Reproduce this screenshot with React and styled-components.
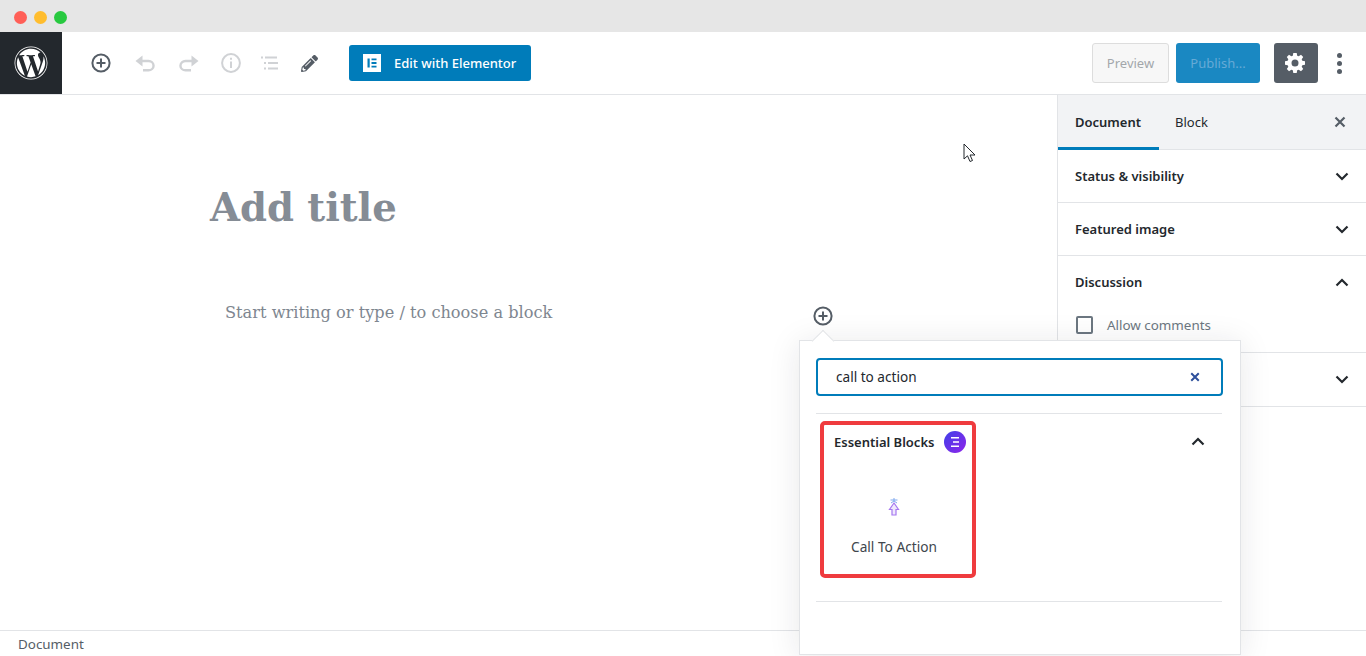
import styled, { createGlobalStyle } from 'styled-components';
import { FaWordpress, FaPencilAlt } from 'react-icons/fa';

const Global = createGlobalStyle`
  html, body { margin: 0; padding: 0; background: #fff; }
  body { font-family: "Noto Sans", "Open Sans", sans-serif; overflow: hidden; }
  * { box-sizing: border-box; }
`;

const Shell = styled.div`
  width: 1366px;
  height: 656px;
  display: flex;
  flex-direction: column;
  position: relative;
  overflow: hidden;
`;

const TitleBar = styled.div`
  height: 32px;
  background: #e6e6e6;
  display: flex;
  align-items: center;
  gap: 7px;
  padding: 2px 0 0 14px;
`;

const Dot = styled.span`
  width: 13px;
  height: 13px;
  border-radius: 50%;
  background: ${(p) => p.$color};
`;

const Toolbar = styled.header`
  height: 63px;
  border-bottom: 1px solid #e2e4e7;
  display: flex;
  align-items: center;
  padding-right: 16px;
  background: #fff;
`;

const Logo = styled.div`
  width: 62px;
  height: 62px;
  background: #23282d;
  color: #fff;
  display: flex;
  align-items: center;
  justify-content: center;
`;

const Tools = styled.div`
  display: flex;
  align-items: center;
  padding-left: 17px;
`;

const Tool = styled.span`
  width: ${(p) => p.$w || 44}px;
  height: 40px;
  display: flex;
  align-items: center;
  justify-content: center;
  color: ${(p) => (p.$off ? '#d0d2d5' : '#555d66')};
`;

const ElementorButton = styled.div`
  margin-left: 19px;
  width: 182px;
  height: 36px;
  background: #007cba;
  border-radius: 3px;
  color: #fff;
  font-size: 13px;
  font-weight: 500;
  display: flex;
  align-items: center;
  gap: 13px;
  padding-left: 14px;
`;

const Actions = styled.div`
  margin-left: auto;
  display: flex;
  align-items: center;
`;

const PreviewButton = styled.div`
  width: 77px;
  height: 40px;
  border: 1px solid #ddd;
  border-radius: 3px;
  background: #f7f7f7;
  color: #a3a7ab;
  font-size: 13px;
  display: flex;
  align-items: center;
  justify-content: center;
`;

const PublishButton = styled.div`
  margin-left: 7px;
  width: 84px;
  height: 40px;
  border-radius: 3px;
  background: #1a88c2;
  color: #66aad6;
  font-size: 13px;
  display: flex;
  align-items: center;
  justify-content: center;
`;

const GearButton = styled.div`
  margin-left: 14px;
  width: 44px;
  height: 40px;
  border-radius: 3px;
  background: #555d66;
  color: #fff;
  display: flex;
  align-items: center;
  justify-content: center;
  padding-right: 2px;
`;

const MoreButton = styled.div`
  margin-left: 10px;
  width: 22px;
  display: flex;
  flex-direction: column;
  align-items: center;
  gap: 3px;
  & > span {
    width: 5px;
    height: 5px;
    border-radius: 50%;
    background: #555d66;
  }
`;

const Main = styled.div`
  flex: 1;
  display: flex;
  min-height: 0;
`;

const Editor = styled.main`
  flex: 1;
  position: relative;
  display: flex;
  flex-direction: column;
`;

const PostTitle = styled.h1`
  margin: 88px 0 0 210px;
  font-family: "DejaVu Serif", "Liberation Serif", serif;
  font-weight: 700;
  font-size: 38.6px;
  line-height: 50px;
  color: #858c95;
`;

const BlockRow = styled.div`
  margin: 67px 0 0 225px;
  width: 608px;
  height: 32px;
  display: flex;
  align-items: center;
  justify-content: space-between;
`;

const Placeholder = styled.p`
  margin: 0;
  font-family: "DejaVu Serif", "Liberation Serif", serif;
  font-size: 16.2px;
  color: #7e8690;
  position: relative;
  top: -4px;
`;

const InserterIcon = styled.span`
  display: flex;
  color: #555d66;
`;

const Popover = styled.div`
  position: absolute;
  left: 799px;
  top: 245px;
  width: 442px;
  height: 315px;
  background: #fff;
  border: 1px solid #e2e4e7;
  box-shadow: 0 3px 30px rgba(25, 30, 35, 0.1);
  padding: 17px 17px 0 16px;
  z-index: 5;
  &::before {
    content: '';
    position: absolute;
    left: 15px;
    top: -8px;
    width: 15px;
    height: 15px;
    background: #fff;
    border-left: 1px solid #e2e4e7;
    border-top: 1px solid #e2e4e7;
    transform: rotate(45deg);
  }
`;

const SearchBox = styled.div`
  position: relative;
  width: 407px;
  height: 38px;
  border: 2px solid #007cba;
  border-radius: 4px;
  display: flex;
  align-items: center;
  justify-content: space-between;
  padding: 0 21px 1px 18px;
  font-size: 13.6px;
  color: #23282d;
`;

const ResultSection = styled.section`
  margin-top: 17px;
  width: 406px;
  height: 189px;
  border-top: 1px solid #e2e4e7;
  border-bottom: 1px solid #e2e4e7;
  display: flex;
  justify-content: space-between;
  align-items: flex-start;
  padding: 7px 17px 0 4px;
`;

const SectionToggle = styled.span`
  display: flex;
  margin-top: 16px;
`;

const HighlightCard = styled.div`
  width: 156px;
  height: 157px;
  border: 4px solid #ef3b3e;
  border-radius: 5px;
  display: flex;
  flex-direction: column;
  padding: 6px 6px 0 10px;
`;

const CategoryRow = styled.div`
  display: flex;
  align-items: center;
  justify-content: space-between;
  font-size: 13px;
  font-weight: 600;
  color: #23282d;
`;

const BrandBadge = styled.span`
  width: 22px;
  height: 22px;
  border-radius: 50%;
  background: linear-gradient(135deg, #3f3fe8, #8f25ea);
  display: flex;
  align-items: center;
  justify-content: center;
`;

const BlockItem = styled.div`
  display: flex;
  flex-direction: column;
  align-items: center;
  margin: 44px 0 0 -4px;
  width: 128px;
  font-size: 13.7px;
  color: #40464d;
  gap: 20px;
`;

const Sidebar = styled.aside`
  width: 309px;
  border-left: 1px solid #e2e4e7;
  display: flex;
  flex-direction: column;
`;

const TabBar = styled.div`
  height: 55px;
  background: #f2f3f5;
  border-bottom: 1px solid #e2e4e7;
  display: flex;
  align-items: stretch;
`;

const Tab = styled.div`
  padding: 2px 18px 0 ${(p) => (p.$active ? 17 : 16)}px;
  display: flex;
  align-items: center;
  font-size: 13px;
  font-weight: ${(p) => (p.$active ? 600 : 400)};
  color: #23282d;
  margin-bottom: -1px;
  border-bottom: 3px solid ${(p) => (p.$active ? '#007cba' : 'transparent')};
`;

const TabClose = styled.span`
  margin-left: auto;
  margin-right: 20px;
  display: flex;
  align-items: center;
  color: #555d66;
`;

const Panel = styled.section`
  border-bottom: 1px solid #e2e4e7;
`;

const PanelHead = styled.div`
  height: ${(p) => (p.$tall ? 53 : 52)}px;
  display: flex;
  align-items: center;
  justify-content: space-between;
  padding: 0 17px 0 17px;
  font-size: 13px;
  font-weight: 600;
  color: #23282d;
`;

const CheckRow = styled.label`
  height: 44px;
  display: flex;
  align-items: flex-start;
  gap: 14px;
  padding: 8px 0 0 18px;
  font-size: 13.4px;
  color: #6c7781;
  line-height: 19px;
`;

const CheckBox = styled.span`
  width: 17px;
  height: 18px;
  border: 2px solid #6c7781;
  border-radius: 2px;
`;

const StatusBar = styled.footer`
  height: 26px;
  border-top: 1px solid #e2e4e7;
  padding-left: 18px;
  display: flex;
  align-items: center;
  font-size: 13.4px;
  color: #555d66;
`;

const Cursor = styled.svg`
  position: absolute;
  left: 963px;
  top: 143px;
  z-index: 6;
`;

const Chevron = ({ up, color = '#23282d' }) => (
  <svg width="14" height="9" viewBox="0 0 14 9" fill="none" stroke={color} strokeWidth="2.2">
    <path d={up ? 'M1.5 7.5 7 2l5.5 5.5' : 'M1.5 1.5 7 7l5.5-5.5'} />
  </svg>
);

const CloseX = ({ size = 12, width = 2.2, color = 'currentColor' }) => (
  <svg width={size} height={size} viewBox="0 0 12 12" fill="none" stroke={color} strokeWidth={width}>
    <path d="M1.5 1.5l9 9M10.5 1.5l-9 9" />
  </svg>
);

const PlusCircle = () => (
  <svg width="20" height="20" viewBox="0 0 20 20" fill="none" stroke="currentColor" strokeWidth="2">
    <circle cx="10" cy="10" r="8.6" />
    <path d="M10 5.5v9M5.5 10h9" />
  </svg>
);

const Undo = () => (
  <svg width="20" height="17" viewBox="0 0 20 17" fill="none" stroke="currentColor" strokeWidth="2.4">
    <path d="M7.5 0.5 0.5 6l7 5.500z" fill="currentColor" stroke="none" />
    <path d="M5 6h8.500a5 4.600 0 0 1 0 9.300H8" />
  </svg>
);

const Redo = () => (
  <svg width="20" height="17" viewBox="0 0 20 17" fill="none" stroke="currentColor" strokeWidth="2.4">
    <path d="M12.5 0.5 19.500 6l-7 5.500z" fill="currentColor" stroke="none" />
    <path d="M15 6H6.500a5 4.600 0 0 0 0 9.300H12" />
  </svg>
);

const Info = () => (
  <svg width="20" height="20" viewBox="0 0 20 20" fill="none" stroke="currentColor" strokeWidth="2">
    <circle cx="10" cy="10" r="8.900" />
    <path d="M10 8.500V15M10 4.800v2" />
  </svg>
);

const ListIcon = () => (
  <svg width="18" height="14" viewBox="0 0 18 14" fill="none" stroke="currentColor" strokeWidth="2">
    <path d="M0 1.500h2M4 1.500h12M3 7h2M7 7h10M3 12.500h2M7 12.500h10" />
  </svg>
);

const ElementorMark = () => (
  <svg width="18" height="18" viewBox="0 0 18 18">
    <rect width="18" height="18" fill="#fff" />
    <path d="M4.500 4.500h2.200v9H4.500zM8.500 4.500h5v1.800h-5zM8.500 8.100h5v1.800h-5zM8.500 11.700h5v1.800h-5z" fill="#007cba" />
  </svg>
);

const Gear = () => (
  <svg width="20" height="20" viewBox="0 0 20 20" fill="#fff">
    <path
      fillRule="evenodd"
      d="M8.300 0h3.400l.5 2.700 1.500.6L16 1.800 18.200 4l-1.500 2.300.6 1.500 2.700.5v3.400l-2.700.5-.6 1.500 1.500 2.300-2.200 2.200-2.300-1.500-1.500.6-.5 2.700H8.300l-.5-2.700-1.500-.6L4 18.200 1.800 16l1.500-2.300-.6-1.500L0 11.700V8.300l2.700-.5.6-1.500L1.800 4 4 1.800l2.300 1.500 1.500-.6zM10 6.500a3.500 3.500 0 1 0 0 7 3.500 3.500 0 0 0 0-7z"
    />
  </svg>
);

const BadgeLines = () => (
  <svg width="12" height="12" viewBox="0 0 12 12" fill="#fff">
    <path d="M2 1h8v1.500H2zM4 5.200h6v1.500H4zM2 9.500h8V11H2z" />
  </svg>
);

const CallToActionIcon = () => (
  <svg width="12" height="20" viewBox="0 0 12 20" fill="none">
    <path d="M6 1v3M2.500 3 9.500 3M3 6l3-2 3 2" stroke="#7fa8ee" strokeWidth="1" />
    <path d="M6 6 1.500 12.500H4V18h4v-5.500h2.500z" stroke="#a678f0" strokeWidth="1.200" fill="#efe8fd" />
  </svg>
);

export default function App() {
  return (
    <>
      <Global />
      <Shell>
        <TitleBar>
          <Dot $color="#ff5f57" />
          <Dot $color="#ffbd2e" />
          <Dot $color="#28c940" />
        </TitleBar>

        <Toolbar>
          <Logo>
            <FaWordpress size={34} />
          </Logo>
          <Tools>
            <Tool><PlusCircle /></Tool>
            <Tool $off><Undo /></Tool>
            <Tool $off><Redo /></Tool>
            <Tool $off $w={40}><Info /></Tool>
            <Tool $off $w={38}><ListIcon /></Tool>
            <Tool $w={41}><FaPencilAlt size={17} /></Tool>
          </Tools>
          <ElementorButton>
            <ElementorMark />
            Edit with Elementor
          </ElementorButton>
          <Actions>
            <PreviewButton>Preview</PreviewButton>
            <PublishButton>Publish...</PublishButton>
            <GearButton><Gear /></GearButton>
            <MoreButton><span /><span /><span /></MoreButton>
          </Actions>
        </Toolbar>

        <Main>
          <Editor>
            <PostTitle>Add title</PostTitle>
            <BlockRow>
              <Placeholder>Start writing or type / to choose a block</Placeholder>
              <InserterIcon><PlusCircle /></InserterIcon>
            </BlockRow>

            <Popover>
              <SearchBox>
                call to action
                <CloseX size={10} width={2.4} color="#2d4f9b" />
              </SearchBox>
              <ResultSection>
                <HighlightCard>
                  <CategoryRow>
                    Essential Blocks
                    <BrandBadge><BadgeLines /></BrandBadge>
                  </CategoryRow>
                  <BlockItem>
                    <CallToActionIcon />
                    Call To Action
                  </BlockItem>
                </HighlightCard>
                <SectionToggle><Chevron up /></SectionToggle>
              </ResultSection>
            </Popover>
          </Editor>

          <Sidebar>
            <TabBar>
              <Tab $active>Document</Tab>
              <Tab>Block</Tab>
              <TabClose><CloseX size={12} /></TabClose>
            </TabBar>
            <Panel>
              <PanelHead>Status &amp; visibility<Chevron /></PanelHead>
            </Panel>
            <Panel>
              <PanelHead>Featured image<Chevron /></PanelHead>
            </Panel>
            <Panel>
              <PanelHead>Discussion<Chevron up /></PanelHead>
              <CheckRow><CheckBox />Allow comments</CheckRow>
            </Panel>
            <Panel>
              <PanelHead $tall><span /><Chevron /></PanelHead>
            </Panel>
          </Sidebar>
        </Main>

        <StatusBar>Document</StatusBar>

        <Cursor width="14" height="20" viewBox="0 0 14 20">
          <path d="M1 1v15l3.500-3.200L7 18.500l2.500-1-2.500-5.500h5z" fill="#fff" stroke="#23282d" strokeWidth="1" />
        </Cursor>
      </Shell>
    </>
  );
}
